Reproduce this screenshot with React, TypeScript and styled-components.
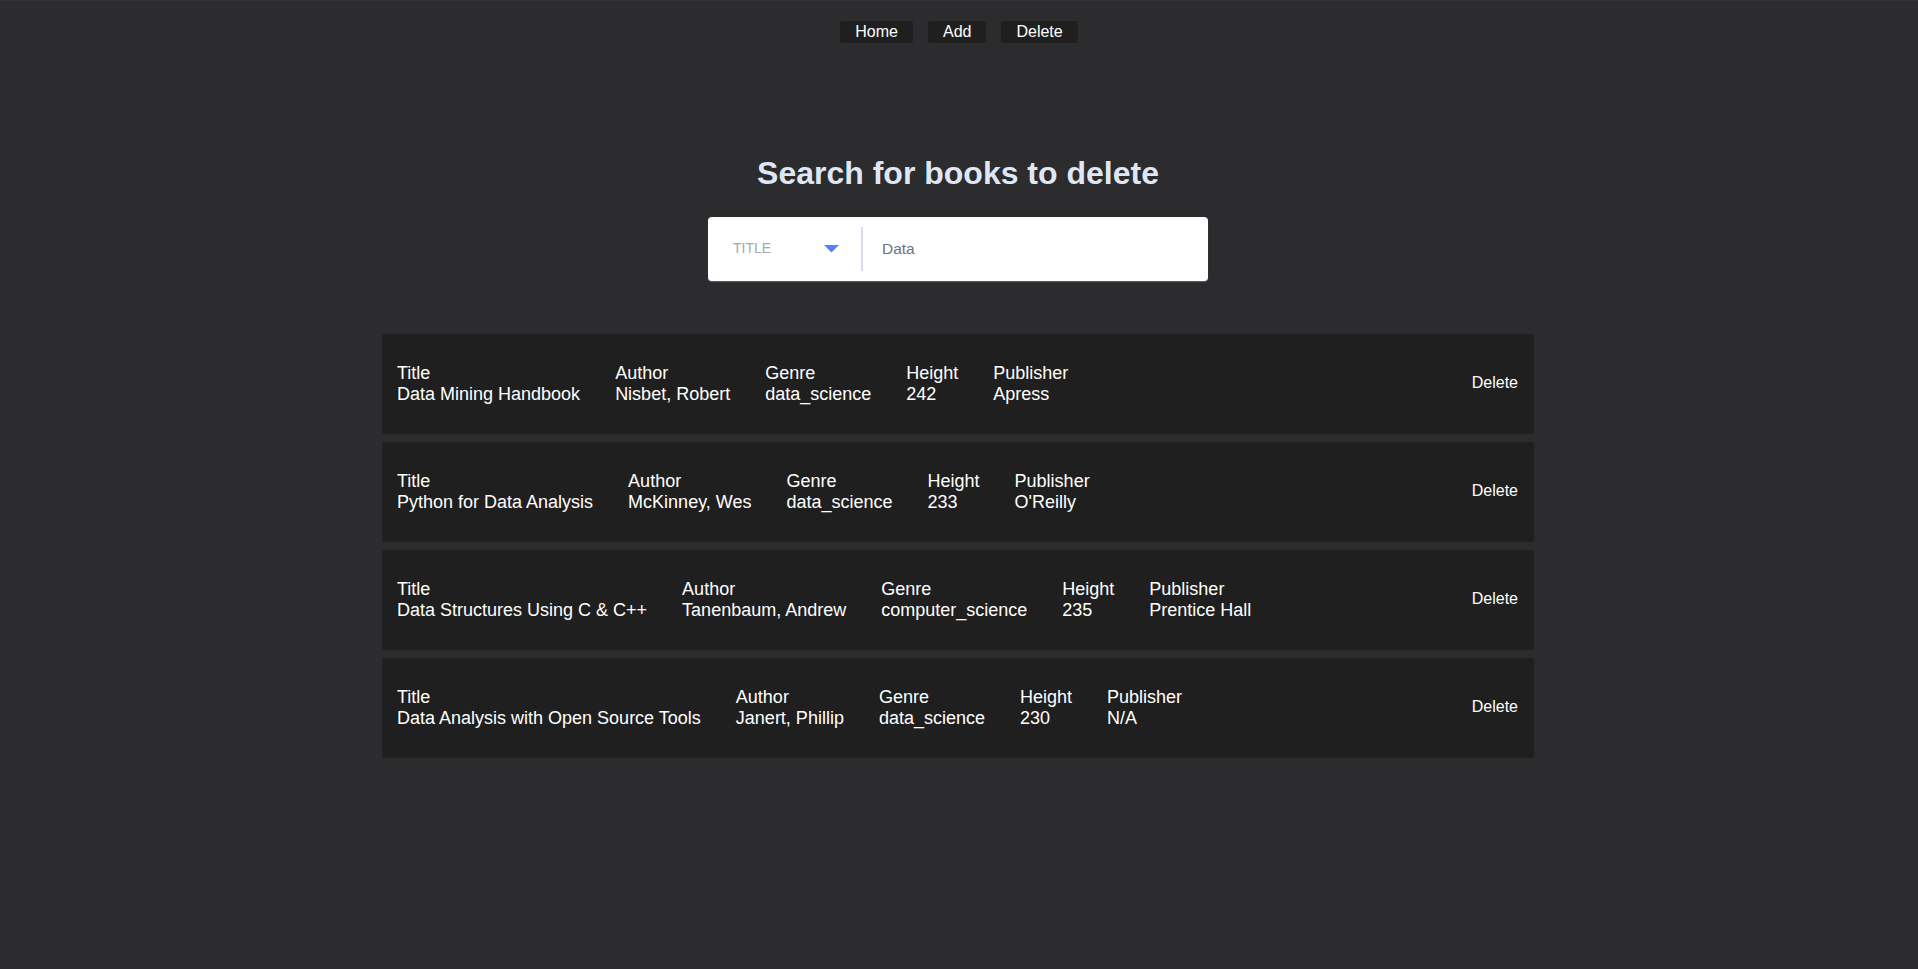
import styled, { createGlobalStyle } from "styled-components";

interface Book {
  title: string;
  author: string;
  genre: string;
  height: number;
  publisher: string;
}

const books: Book[] = [
  {
    title: "Data Mining Handbook",
    author: "Nisbet, Robert",
    genre: "data_science",
    height: 242,
    publisher: "Apress",
  },
  {
    title: "Python for Data Analysis",
    author: "McKinney, Wes",
    genre: "data_science",
    height: 233,
    publisher: "O'Reilly",
  },
  {
    title: "Data Structures Using C & C++",
    author: "Tanenbaum, Andrew",
    genre: "computer_science",
    height: 235,
    publisher: "Prentice Hall",
  },
  {
    title: "Data Analysis with Open Source Tools",
    author: "Janert, Phillip",
    genre: "data_science",
    height: 230,
    publisher: "N/A",
  },
];

export default function App() {
  return (
    <>
      <GlobalStyle />
      <Page>
        <Nav>
          <NavButton>Home</NavButton>
          <NavButton>Add</NavButton>
          <NavButton>Delete</NavButton>
        </Nav>

        <Heading>Search for books to delete</Heading>

        <SearchBox>
          <FieldSelect>
            <SelectLabel>TITLE</SelectLabel>
            <Caret viewBox="0 0 15 8">
              <path d="M0 0 L15 0 L7.5 7.5 Z" fill="#5b7df3" />
            </Caret>
          </FieldSelect>
          <Divider />
          <SearchInput defaultValue="Data" />
        </SearchBox>

        <BookList>
          {books.map((book) => (
            <BookCard key={book.title}>
              <Fields>
                <Field>
                  <span>Title</span>
                  <span>{book.title}</span>
                </Field>
                <Field>
                  <span>Author</span>
                  <span>{book.author}</span>
                </Field>
                <Field>
                  <span>Genre</span>
                  <span>{book.genre}</span>
                </Field>
                <Field>
                  <span>Height</span>
                  <span>{book.height}</span>
                </Field>
                <Field>
                  <span>Publisher</span>
                  <span>{book.publisher}</span>
                </Field>
              </Fields>
              <DeleteButton>Delete</DeleteButton>
            </BookCard>
          ))}
        </BookList>
      </Page>
    </>
  );
}

const GlobalStyle = createGlobalStyle`
  html, body {
    margin: 0;
    background-color: #2c2c2f;
  }
  body {
    font-family: "Liberation Sans", Arial, sans-serif;
    color: #ffffff;
  }
`;

const Page = styled.div`
  min-height: 969px;
  box-sizing: border-box;
  border-top: 1px solid #34343f;
  padding-right: 2px;
  display: flex;
  flex-direction: column;
  align-items: center;
`;

const Nav = styled.nav`
  display: flex;
  justify-content: center;
  gap: 15px;
  margin: 20px 0 0 2px;
`;

const NavButton = styled.button`
  font-family: "Liberation Sans", Arial, sans-serif;
  font-size: 16px;
  line-height: 18px;
  color: #ffffff;
  background-color: #1f1f1f;
  border: none;
  border-radius: 3px;
  padding: 2px 15px;
  cursor: pointer;
`;

const Heading = styled.h1`
  font-size: 32px;
  font-weight: bold;
  line-height: 37px;
  color: #dfe6f4;
  margin: 112px 0 25px;
`;

const SearchBox = styled.div`
  display: flex;
  align-items: center;
  width: 500px;
  height: 64px;
  background-color: #ffffff;
  border-radius: 4px;
  box-shadow: 0 1px 1px rgba(120, 130, 170, 0.6);
`;

const FieldSelect = styled.div`
  display: flex;
  align-items: center;
  justify-content: space-between;
  width: 106px;
  padding: 0 22px 0 25px;
`;

const SelectLabel = styled.span`
  font-size: 14px;
  color: #a3a6b6;
  margin-top: -2px;
`;

const Caret = styled.svg`
  width: 15px;
  height: 8px;
`;

const Divider = styled.div`
  width: 2px;
  height: 44px;
  background-color: #d6dcec;
`;

const SearchInput = styled.input`
  flex: 1;
  border: none;
  outline: none;
  background: transparent;
  font-family: "Liberation Sans", Arial, sans-serif;
  font-size: 15.5px;
  color: #6d7283;
  padding: 0 20px 0 19px;
`;

const BookList = styled.div`
  display: flex;
  flex-direction: column;
  gap: 8px;
  width: 1152px;
  margin-top: 53px;
`;

const BookCard = styled.div`
  display: flex;
  align-items: center;
  justify-content: space-between;
  height: 100px;
  box-sizing: border-box;
  padding: 0 16px 0 15px;
  background-color: #1f1f1f;
  border-radius: 3px;
`;

const Fields = styled.div`
  display: flex;
  gap: 35px;
`;

const Field = styled.div`
  display: flex;
  flex-direction: column;
  font-size: 18px;
  line-height: 21px;
  color: #ffffff;
`;

const DeleteButton = styled.button`
  font-family: "Liberation Sans", Arial, sans-serif;
  font-size: 16px;
  color: #ffffff;
  background: transparent;
  border: none;
  padding: 0 0 2px;
  cursor: pointer;
`;
